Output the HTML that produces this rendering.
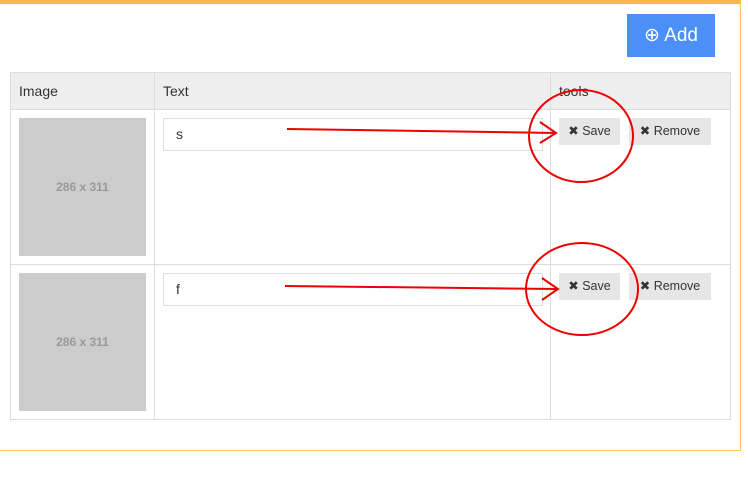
<!DOCTYPE html>
<html><head><style>
body{margin:0;width:748px;height:494px;background:#fff;font-family:"Liberation Sans",sans-serif;position:relative;overflow:hidden}
.box{position:absolute;left:-2px;top:0;width:743px;height:451px;border-top:4px solid #fbb84a;border-right:1.5px solid #fcc860;border-bottom:1.5px solid #fcc860;box-sizing:border-box}
.add{position:absolute;left:627px;top:14px;width:88px;height:43px;background:#4b90f8;color:#fff;font-size:19px;line-height:43px;text-align:center}
.d{position:absolute;background:#ddd}
.hd{position:absolute;left:10px;top:72px;width:720px;height:37px;background:#eee}
.t{position:absolute;font-size:14px;color:#333}
.img{position:absolute;left:19px;width:127px;height:138px;background:#ccc;color:#999;font-size:12px;font-weight:bold;text-align:center;line-height:138px}
.inp{position:absolute;left:163px;width:380px;height:33px;border:1px solid #ddd;box-sizing:border-box;font-size:14px;line-height:31px;padding-left:12px;color:#333}
.btn{position:absolute;height:27px;background:#e6e6e6;font-size:12.5px;color:#333;line-height:27px;text-align:center}
</style></head><body>
<div class="box"></div>
<div class="add">⊕ Add</div>
<div class="hd"></div>
<div class="d" style="left:10px;top:72px;width:720px;height:1px"></div>
<div class="d" style="left:10px;top:109px;width:720px;height:1px"></div>
<div class="d" style="left:10px;top:264px;width:720px;height:1px"></div>
<div class="d" style="left:10px;top:419px;width:721px;height:1px"></div>
<div class="d" style="left:10px;top:72px;width:1px;height:347px"></div>
<div class="d" style="left:154px;top:72px;width:1px;height:347px"></div>
<div class="d" style="left:550px;top:72px;width:1px;height:347px"></div>
<div class="d" style="left:730px;top:72px;width:1px;height:347px"></div>
<div class="t" style="left:19px;top:83px">Image</div>
<div class="t" style="left:163px;top:83px">Text</div>
<div class="t" style="left:559px;top:83px">tools</div>
<div class="img" style="top:118px">286 x 311</div>
<div class="img" style="top:273px">286 x 311</div>
<div class="inp" style="top:118px">s</div>
<div class="inp" style="top:273px">f</div>
<div class="btn" style="left:559px;top:118px;width:61px">✖ Save</div>
<div class="btn" style="left:629px;top:118px;width:82px">✖ Remove</div>
<div class="btn" style="left:559px;top:273px;width:61px">✖ Save</div>
<div class="btn" style="left:629px;top:273px;width:82px">✖ Remove</div>
<svg width="748" height="494" style="position:absolute;left:0;top:0" fill="none" stroke="#e00" stroke-width="2">
<ellipse cx="581" cy="136" rx="52" ry="46"/>
<ellipse cx="582" cy="289" rx="56" ry="46"/>
<path d="M287 129 L556 133 M540 122 L556 133 L540 143"/>
<path d="M285 286 L558 289 M542 278 L558 289 L542 300"/>
</svg>
</body></html>
